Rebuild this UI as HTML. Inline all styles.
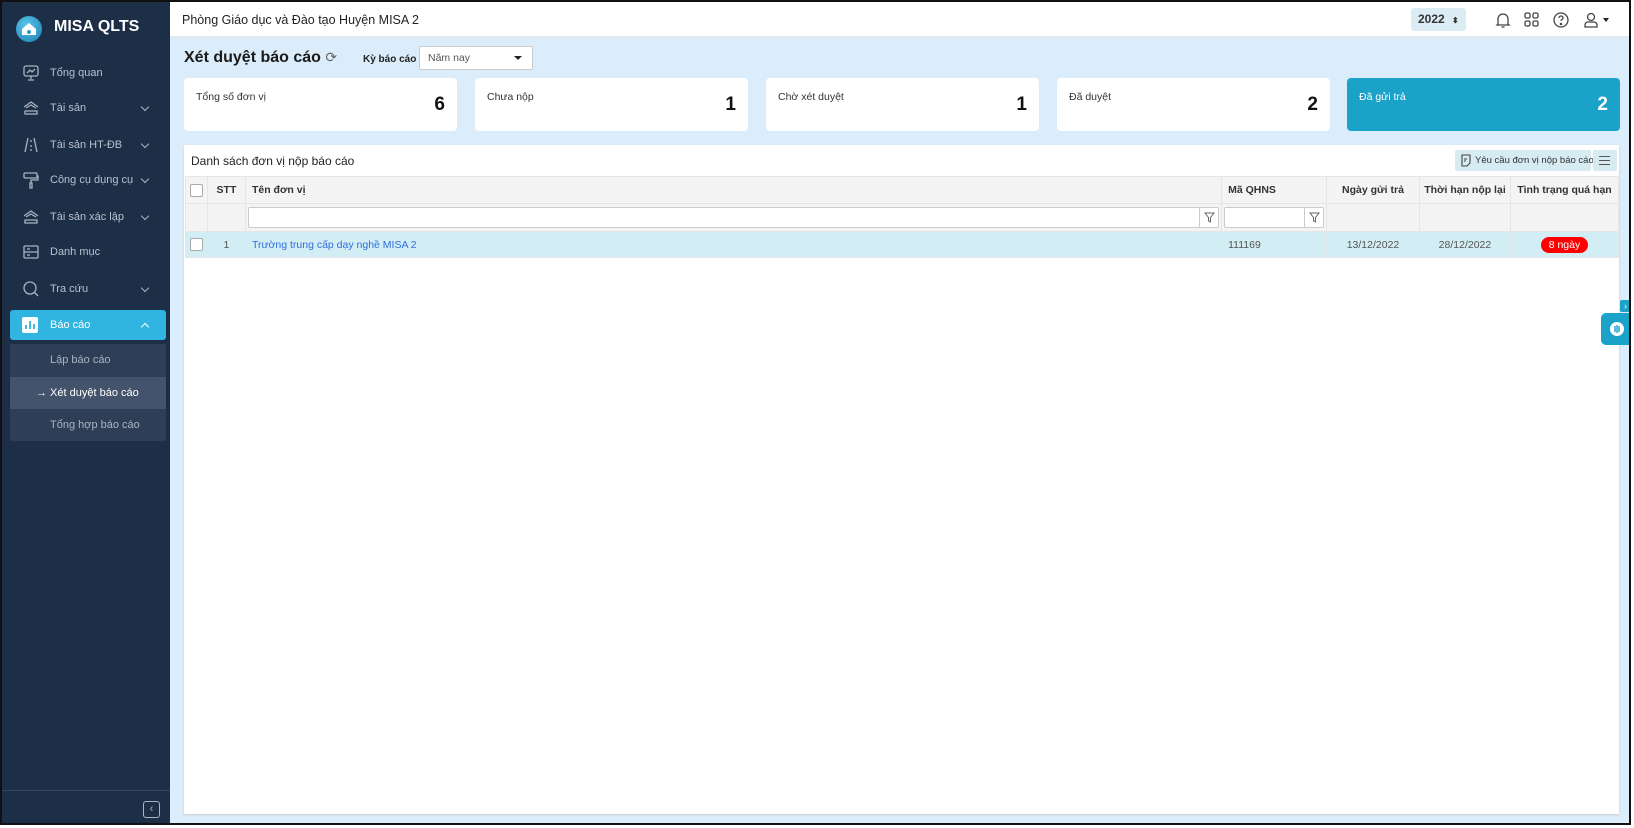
<!DOCTYPE html>
<html><head><meta charset="utf-8"><style>
*{box-sizing:border-box;margin:0;padding:0}
body{width:1634px;height:828px;background:#fff;font-family:"Liberation Sans",Arial,sans-serif;position:relative;overflow:hidden;color:#222}
.frame{position:absolute;left:0;top:0;width:1631px;height:825px;border:2px solid #111;overflow:hidden;background:#dbecfa}
.side{position:absolute;left:0;top:0;width:168px;height:823px;background:#1d2e47;color:#c8d0dc}
.logo{position:absolute;left:14px;top:14px;width:26px;height:26px;border-radius:50%;background:radial-gradient(circle at 40% 35%,#5cc6ea,#1a7fb0)}
.brand{position:absolute;left:52px;top:16px;font-size:16px;font-weight:bold;color:#fff}
.it{position:absolute;left:0;width:168px;height:30px;font-size:11px;line-height:30px;padding-left:48px;color:#b8c2cf}
.it svg.ic{position:absolute;left:20px;top:6px}
.chev{position:absolute;left:140px;top:11px;width:6px;height:6px;border-right:1.4px solid #aab4c2;border-bottom:1.4px solid #aab4c2;transform:rotate(45deg)}
.act{left:8px;width:156px;background:#30b4e0;border-radius:3px;color:#fff;padding-left:40px}
.sub{position:absolute;left:8px;top:342px;width:156px;height:97px;background:#2e3e57}
.subi{position:absolute;left:0;width:156px;height:32px;line-height:32px;font-size:11px;padding-left:40px;color:#aab4c2}
.head{position:absolute;left:168px;top:0;right:0;height:35px;background:#fff;border-bottom:1px solid #e2e8ee}
.title{position:absolute;left:182px;top:47px;font-size:16px;font-weight:bold;color:#1a1a1a}
.card{position:absolute;top:76px;width:273px;height:53px;background:#fff;border-radius:4px}
.card .l{position:absolute;left:12px;top:13px;font-size:10.5px;color:#333}
.card .n{position:absolute;right:12px;top:16px;font-size:19px;font-weight:bold;color:#111}
.panel{position:absolute;left:182px;top:143px;width:1435px;height:669px;background:#fff;box-shadow:0 1px 2px #ccc}
table{position:absolute;left:1px;top:31px;border-collapse:collapse;font-size:10.5px;table-layout:fixed}
td{border:1px solid #e4e6e9;height:27px;padding:0 6px;white-space:nowrap;overflow:hidden}
.hr td{background:#f4f4f4;font-weight:bold;color:#333;height:27px}
.fr td{background:#f4f4f4;height:28px}
.dr td{background:#d2edf4;color:#555;height:26px}
.cb{display:inline-block;width:13px;height:13px;border:1px solid #aaa;border-radius:2px;background:#fff;vertical-align:middle}
.inp{height:21px;border:1px solid #ccc;background:#fff;position:relative;border-radius:2px}
.inp .f{position:absolute;right:0;top:0;width:19px;height:19px;border-left:1px solid #ccc}
</style></head><body>
<div class="frame">
<div class="side">
 <div class="logo"><svg width="26" height="26" viewBox="0 0 26 26"><path d="M6 13 L13 7 L20 13 L20 19 L6 19Z" fill="#fff"/><circle cx="13" cy="16" r="2" fill="#2a9bcf"/></svg></div>
 <div class="brand">MISA QLTS</div>
 <div class="it" style="top:56px"><svg class="ic" width="18" height="18" viewBox="0 0 18 18" fill="none" stroke="#aab4c2" stroke-width="1.3"><rect x="2" y="2" width="14" height="10" rx="2"/><path d="M5 9l3-3 2 2 3-3M9 12v3M6 16h6"/></svg>Tổng quan</div>
 <div class="it" style="top:91px"><svg class="ic" width="18" height="18" viewBox="0 0 18 18" fill="none" stroke="#aab4c2" stroke-width="1.3"><path d="M2 8L9 3l7 5M4 9l5-3 5 3M3 15v-3h12v3z"/></svg>Tài sản<span class="chev"></span></div>
 <div class="it" style="top:128px"><svg class="ic" width="18" height="18" viewBox="0 0 18 18" fill="none" stroke="#aab4c2" stroke-width="1.3"><path d="M6 2L3 16M12 2l3 14M9 4v2M9 9v2M9 13v2"/></svg>Tài sản HT-ĐB<span class="chev"></span></div>
 <div class="it" style="top:163px"><svg class="ic" width="18" height="18" viewBox="0 0 18 18" fill="none" stroke="#aab4c2" stroke-width="1.3"><rect x="2" y="2" width="13" height="5" rx="1"/><path d="M15 5h1v4H9v3M8 12h2v5H8z"/></svg>Công cụ dụng cụ<span class="chev"></span></div>
 <div class="it" style="top:200px"><svg class="ic" width="18" height="18" viewBox="0 0 18 18" fill="none" stroke="#aab4c2" stroke-width="1.3"><path d="M2 8L9 3l7 5M4 9l5-3 5 3M3 15v-3h12v3z"/></svg>Tài sản xác lập<span class="chev"></span></div>
 <div class="it" style="top:235px"><svg class="ic" width="18" height="18" viewBox="0 0 18 18" fill="none" stroke="#aab4c2" stroke-width="1.3"><rect x="2" y="3" width="14" height="12" rx="1"/><path d="M2 9h14M5 6h3M5 12h3"/></svg>Danh mục</div>
 <div class="it" style="top:272px"><svg class="ic" width="18" height="18" viewBox="0 0 18 18" fill="none" stroke="#aab4c2" stroke-width="1.3"><circle cx="8" cy="8" r="6"/><path d="M12 12l4 4"/></svg>Tra cứu<span class="chev"></span></div>
 <div class="it act" style="top:308px"><svg class="ic" style="left:12px;top:7px" width="16" height="16" viewBox="0 0 16 16"><rect width="16" height="16" rx="2" fill="#fff"/><path d="M4 12V8M8 12V4M12 12V7" stroke="#30b4e0" stroke-width="1.8"/></svg>Báo cáo<span class="chev" style="left:132px;top:14px;border-color:#fff;transform:rotate(225deg)"></span></div>
 <div class="sub">
  <div class="subi" style="top:0">Lập báo cáo</div>
  <div class="subi" style="top:33px;background:#43536b;color:#fff;padding-left:26px">→ Xét duyệt báo cáo</div>
  <div class="subi" style="top:65px">Tổng hợp báo cáo</div>
 </div>
 <div style="position:absolute;left:0;top:788px;width:168px;border-top:1px solid #34455e"></div>
 <div style="position:absolute;left:141px;top:799px;width:17px;height:17px;border:1.3px solid #aab4c2;border-radius:3px;color:#aab4c2;font-size:11px;line-height:14px;text-align:center">‹</div>
</div>
<div class="head">
 <div style="position:absolute;left:12px;top:11px;font-size:12.5px;color:#222">Phòng Giáo dục và Đào tạo Huyện MISA 2</div>
 <div style="position:absolute;left:1241px;top:6px;width:55px;height:23px;background:#dbecf5;border-radius:3px;font-size:12px;font-weight:bold;line-height:23px;padding-left:7px;color:#333">2022 <span style="font-size:8px;margin-left:4px">⬍</span></div>
 <svg style="position:absolute;left:1324px;top:9px" width="18" height="18" viewBox="0 0 18 18" fill="none" stroke="#444" stroke-width="1.3"><path d="M4 13V8a5 5 0 0110 0v5l1 1H3zM7.5 16h3"/></svg>
 <svg style="position:absolute;left:1353px;top:9px" width="18" height="18" viewBox="0 0 18 18" fill="none" stroke="#444" stroke-width="1.3"><rect x="2" y="2" width="5" height="5" rx="1.5"/><rect x="10" y="2" width="5" height="5" rx="1.5"/><rect x="2" y="10" width="5" height="5" rx="1.5"/><rect x="10" y="10" width="5" height="5" rx="1.5"/></svg>
 <svg style="position:absolute;left:1382px;top:9px" width="18" height="18" viewBox="0 0 18 18" fill="none" stroke="#444" stroke-width="1.3"><circle cx="9" cy="9" r="7"/><path d="M7 7a2 2 0 114 0c0 1.5-2 1.5-2 3"/><circle cx="9" cy="13" r=".6" fill="#444"/></svg>
 <svg style="position:absolute;left:1412px;top:9px" width="18" height="18" viewBox="0 0 18 18" fill="none" stroke="#444" stroke-width="1.3"><circle cx="9" cy="6" r="3.5"/><path d="M3 16v-2a3 3 0 013-3h6a3 3 0 013 3v2z"/></svg>
 <div style="position:absolute;left:1433px;top:16px;border:3.5px solid transparent;border-top:4px solid #222"></div>
</div>
<div class="title">Xét duyệt báo cáo <span style="font-weight:normal;color:#666;font-size:14px">⟳</span></div>
<div style="position:absolute;left:361px;top:52px;font-size:10px;font-weight:bold">Kỳ báo cáo</div>
<div style="position:absolute;left:417px;top:44px;width:114px;height:24px;background:#fff;border:1px solid #ccc;border-radius:2px;font-size:10.5px;color:#555;line-height:22px;padding-left:8px">Năm nay<span style="position:absolute;right:10px;top:9px;border:4px solid transparent;border-top:4px solid #222"></span></div>
<div class="card" style="left:182px"><div class="l">Tổng số đơn vị</div><div class="n">6</div></div>
<div class="card" style="left:473px"><div class="l">Chưa nộp</div><div class="n">1</div></div>
<div class="card" style="left:764px"><div class="l">Chờ xét duyệt</div><div class="n">1</div></div>
<div class="card" style="left:1055px"><div class="l">Đã duyệt</div><div class="n">2</div></div>
<div class="card" style="left:1345px;width:273px;background:#1aa2c9"><div class="l" style="color:#fff">Đã gửi trả</div><div class="n" style="color:#fff">2</div></div>
<div class="panel">
 <div style="position:absolute;left:7px;top:9px;font-size:12px;color:#222">Danh sách đơn vị nộp báo cáo</div>
 <div style="position:absolute;left:1271px;top:5px;width:136px;height:21px;background:#d6ebf2;border-radius:2px;font-size:9.5px;line-height:21px;padding-left:20px;color:#333;white-space:nowrap"><svg style="position:absolute;left:5px;top:4px" width="12" height="13" viewBox="0 0 12 13" fill="none" stroke="#444" stroke-width="1.1"><path d="M2 1h8v8l-3 3H2zM4 5h3M4 7h2"/></svg>Yêu cầu đơn vị nộp báo cáo</div>
 <div style="position:absolute;left:1409px;top:5px;width:24px;height:21px;background:#d6ebf2;border-radius:2px"><div style="margin:6px 6px;width:11px;height:9px;border-top:1.3px solid #555;border-bottom:1.3px solid #555;position:relative"><div style="position:absolute;top:2.5px;width:11px;border-top:1.3px solid #555"></div></div></div>
 <table>
  <colgroup><col style="width:22px"><col style="width:38px"><col style="width:977px"><col style="width:105px"><col style="width:93px"><col style="width:91px"><col style="width:108px"></colgroup>
  <tr class="hr"><td style="text-align:center;padding:0"><span class="cb"></span></td><td style="text-align:center;padding:0">STT</td><td>Tên đơn vị</td><td>Mã QHNS</td><td style="text-align:center;padding:0">Ngày gửi trả</td><td style="text-align:center;padding:0">Thời hạn nộp lại</td><td style="text-align:center;padding:0">Tình trạng quá hạn</td></tr>
  <tr class="fr"><td></td><td></td><td style="padding:0 2px"><div class="inp"><div class="f"><svg width="19" height="19" viewBox="0 0 19 19" fill="none" stroke="#666"><path d="M5 5h9l-3.5 4.5V14l-2-1V9.5z"/></svg></div></div></td><td style="padding:0 2px"><div class="inp"><div class="f"><svg width="19" height="19" viewBox="0 0 19 19" fill="none" stroke="#666"><path d="M5 5h9l-3.5 4.5V14l-2-1V9.5z"/></svg></div></div></td><td></td><td></td><td></td></tr>
  <tr class="dr"><td style="text-align:center;padding:0"><span class="cb"></span></td><td style="text-align:center">1</td><td style="color:#2f6ee0">Trường trung cấp dạy nghề MISA 2</td><td>111169</td><td style="text-align:center;padding:0">13/12/2022</td><td style="text-align:center;padding:0">28/12/2022</td><td style="text-align:center;padding:0"><span style="background:#f00;color:#fff;border-radius:9px;padding:2px 8px">8 ngày</span></td></tr>
 </table>
</div>
<div style="position:absolute;left:1618px;top:298px;width:11px;height:12px;background:#1aa2c9;border-radius:2px 0 0 2px;color:#fff;font-size:9px;line-height:12px;text-align:center">›</div>
<div style="position:absolute;left:1599px;top:311px;width:32px;height:32px;background:#1aa2c9;border-radius:5px 0 0 5px"><svg style="margin:8px 8px" width="16" height="16" viewBox="0 0 16 16"><circle cx="8" cy="8" r="7" fill="#fff"/><path d="M6 5v6M8 4v8M10 5v6" stroke="#1aa2c9" stroke-width="1.4"/></svg></div>
</div>
</body></html>
